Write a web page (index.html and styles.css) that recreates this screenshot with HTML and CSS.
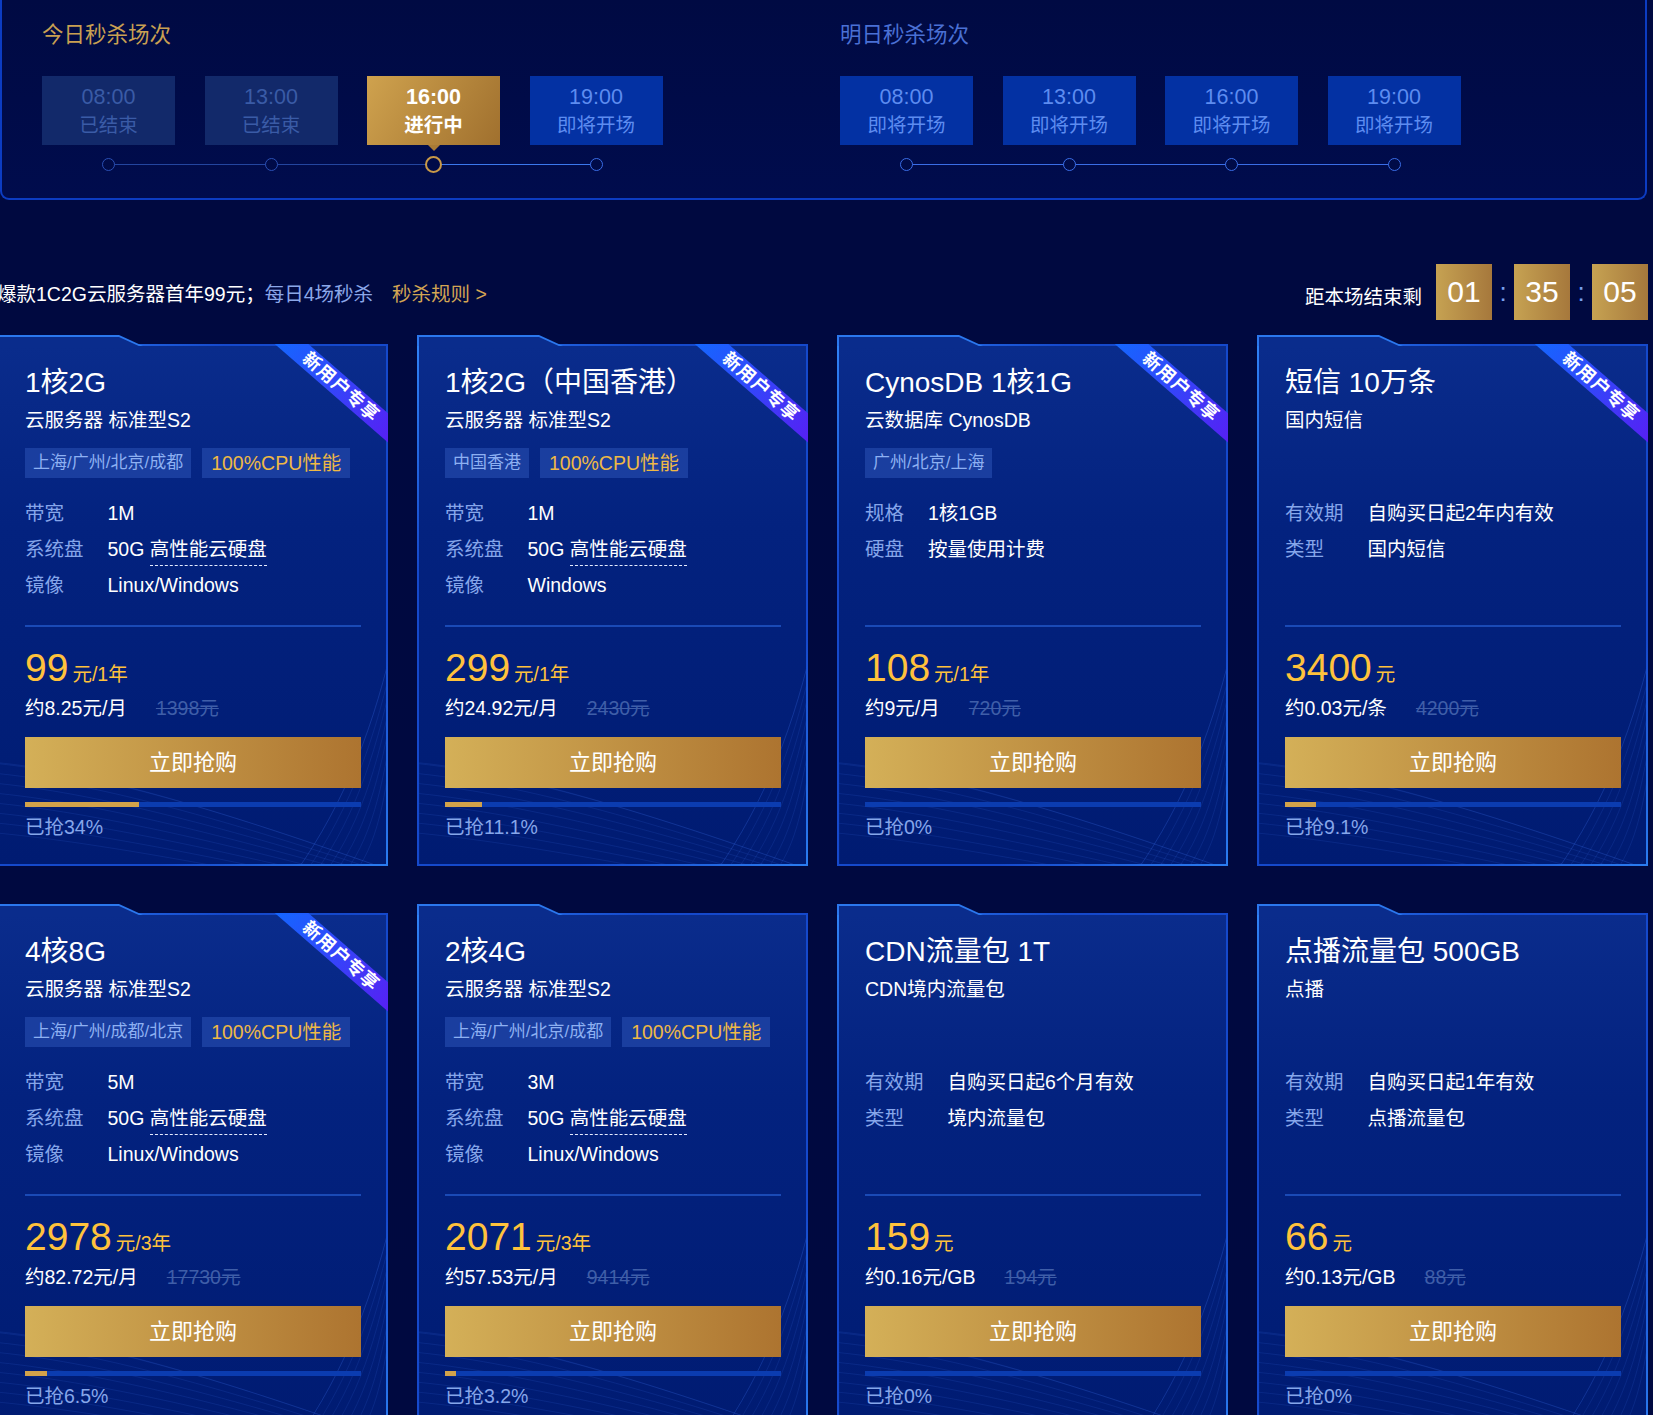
FILE: index.html
```html
<!DOCTYPE html>
<html lang="zh-CN">
<head>
    <meta charset="utf-8">
    <title>限时秒杀</title>
    <link rel="stylesheet" href="styles.css">
</head>

<body>
    <svg class="defs" width="0" height="0" aria-hidden="true">
        <defs>
            <g id="mesh">
                <path class="mesh-fill" d="M0 420 C 100 430, 230 470, 400 530 L 0 530 Z" />
                <path class="mesh-fill" d="M400 290 C 380 380, 350 460, 300 530 L 400 530 Z" />
                <path d="M-10 420 C 100 430, 230 470, 400 530" />
                <path d="M-10 430 C 100 440, 230 478, 400 534" />
                <path d="M-10 440 C 100 450, 230 486, 400 538" />
                <path d="M-10 450 C 100 460, 230 494, 400 542" />
                <path d="M-10 460 C 100 470, 230 502, 400 546" />
                <path d="M-10 470 C 100 480, 230 510, 400 550" />
                <path d="M-10 480 C 100 490, 230 518, 400 554" />
                <path d="M-10 490 C 100 500, 230 526, 400 558" />
                <path d="M400 290 C 380 380, 350 460, 300 530" />
                <path d="M400 305 C 382 390, 356 466, 310 530" />
                <path d="M400 320 C 384 400, 362 472, 320 530" />
                <path d="M400 335 C 386 410, 368 478, 330 530" />
                <path d="M400 350 C 388 420, 374 484, 340 530" />
                <path d="M400 365 C 390 430, 380 490, 350 530" />
                <path d="M400 380 C 392 440, 386 496, 360 530" />
            </g>
        </defs>
    </svg>

    <div class="page">
        <div class="sessions">
            <div class="days">
                <div class="day">
                    <div class="day-title today">今日秒杀场次</div>
                    <div class="slots">
                        <div class="slot ended"><b>08:00</b><span>已结束</span></div>
                        <div class="slot ended"><b>13:00</b><span>已结束</span></div>
                        <div class="slot active"><b>16:00</b><span>进行中</span></div>
                        <div class="slot soon"><b>19:00</b><span>即将开场</span></div>
                    </div>
                    <div class="track track-today"><i></i><i></i><i class="on"></i><i class="next"></i></div>
                </div>
                <div class="day">
                    <div class="day-title">明日秒杀场次</div>
                    <div class="slots">
                        <div class="slot soon"><b>08:00</b><span>即将开场</span></div>
                        <div class="slot soon"><b>13:00</b><span>即将开场</span></div>
                        <div class="slot soon"><b>16:00</b><span>即将开场</span></div>
                        <div class="slot soon"><b>19:00</b><span>即将开场</span></div>
                    </div>
                    <div class="track track-next"><i></i><i></i><i></i><i></i></div>
                </div>
            </div>
        </div>

        <div class="promo">
            <div class="promo-text">
                <span class="hot">爆款1C2G云服务器首年99元；</span><span class="daily">每日4场秒杀</span><a class="rules">秒杀规则 &gt;</a>
            </div>
            <div class="countdown">
                <span class="cd-label">距本场结束剩</span>
                <b>01</b><em>:</em><b>35</b><em>:</em><b>05</b>
            </div>
        </div>

        <div class="cards">
            <!-- row 1 -->
            <div class="card">
                <svg class="mesh" viewBox="0 0 391 522" preserveAspectRatio="none"><use href="#mesh" /></svg>
                <div class="ribbon-wrap"><div class="ribbon">新用户专享</div></div>
                <div class="card-title">1核2G</div>
                <div class="card-sub">云服务器 标准型S2</div>
                <div class="tags"><span class="tag">上海/广州/北京/成都</span><span class="tag gold">100%CPU性能</span></div>
                <dl class="specs">
                    <dt>带宽</dt><dd>1M</dd>
                    <dt>系统盘</dt><dd>50G <u>高性能云硬盘</u></dd>
                    <dt>镜像</dt><dd>Linux/Windows</dd>
                </dl>
                <div class="deal">
                    <div class="price"><strong>99</strong><span>元/1年</span></div>
                    <div class="monthly">约8.25元/月<s>1398元</s></div>
                    <a class="buy">立即抢购</a>
                    <div class="bar"><i style="width:34%"></i></div>
                    <div class="sold">已抢34%</div>
                </div>
            </div>

            <div class="card">
                <svg class="mesh" viewBox="0 0 391 522" preserveAspectRatio="none"><use href="#mesh" /></svg>
                <div class="ribbon-wrap"><div class="ribbon">新用户专享</div></div>
                <div class="card-title">1核2G（中国香港）</div>
                <div class="card-sub">云服务器 标准型S2</div>
                <div class="tags"><span class="tag">中国香港</span><span class="tag gold">100%CPU性能</span></div>
                <dl class="specs">
                    <dt>带宽</dt><dd>1M</dd>
                    <dt>系统盘</dt><dd>50G <u>高性能云硬盘</u></dd>
                    <dt>镜像</dt><dd>Windows</dd>
                </dl>
                <div class="deal">
                    <div class="price"><strong>299</strong><span>元/1年</span></div>
                    <div class="monthly">约24.92元/月<s>2430元</s></div>
                    <a class="buy">立即抢购</a>
                    <div class="bar"><i style="width:11.1%"></i></div>
                    <div class="sold">已抢11.1%</div>
                </div>
            </div>

            <div class="card">
                <svg class="mesh" viewBox="0 0 391 522" preserveAspectRatio="none"><use href="#mesh" /></svg>
                <div class="ribbon-wrap"><div class="ribbon">新用户专享</div></div>
                <div class="card-title">CynosDB 1核1G</div>
                <div class="card-sub">云数据库 CynosDB</div>
                <div class="tags"><span class="tag">广州/北京/上海</span></div>
                <dl class="specs">
                    <dt>规格</dt><dd>1核1GB</dd>
                    <dt>硬盘</dt><dd>按量使用计费</dd>
                </dl>
                <div class="deal">
                    <div class="price"><strong>108</strong><span>元/1年</span></div>
                    <div class="monthly">约9元/月<s>720元</s></div>
                    <a class="buy">立即抢购</a>
                    <div class="bar"><i style="width:0%"></i></div>
                    <div class="sold">已抢0%</div>
                </div>
            </div>

            <div class="card">
                <svg class="mesh" viewBox="0 0 391 522" preserveAspectRatio="none"><use href="#mesh" /></svg>
                <div class="ribbon-wrap"><div class="ribbon">新用户专享</div></div>
                <div class="card-title">短信 10万条</div>
                <div class="card-sub">国内短信</div>
                <div class="tags"></div>
                <dl class="specs">
                    <dt>有效期</dt><dd>自购买日起2年内有效</dd>
                    <dt>类型</dt><dd>国内短信</dd>
                </dl>
                <div class="deal">
                    <div class="price"><strong>3400</strong><span>元</span></div>
                    <div class="monthly">约0.03元/条<s>4200元</s></div>
                    <a class="buy">立即抢购</a>
                    <div class="bar"><i style="width:9.1%"></i></div>
                    <div class="sold">已抢9.1%</div>
                </div>
            </div>

            <!-- row 2 -->
            <div class="card">
                <svg class="mesh" viewBox="0 0 391 522" preserveAspectRatio="none"><use href="#mesh" /></svg>
                <div class="ribbon-wrap"><div class="ribbon">新用户专享</div></div>
                <div class="card-title">4核8G</div>
                <div class="card-sub">云服务器 标准型S2</div>
                <div class="tags"><span class="tag">上海/广州/成都/北京</span><span class="tag gold">100%CPU性能</span></div>
                <dl class="specs">
                    <dt>带宽</dt><dd>5M</dd>
                    <dt>系统盘</dt><dd>50G <u>高性能云硬盘</u></dd>
                    <dt>镜像</dt><dd>Linux/Windows</dd>
                </dl>
                <div class="deal">
                    <div class="price"><strong>2978</strong><span>元/3年</span></div>
                    <div class="monthly">约82.72元/月<s>17730元</s></div>
                    <a class="buy">立即抢购</a>
                    <div class="bar"><i style="width:6.5%"></i></div>
                    <div class="sold">已抢6.5%</div>
                </div>
            </div>

            <div class="card">
                <svg class="mesh" viewBox="0 0 391 522" preserveAspectRatio="none"><use href="#mesh" /></svg>
                <div class="card-title">2核4G</div>
                <div class="card-sub">云服务器 标准型S2</div>
                <div class="tags"><span class="tag">上海/广州/北京/成都</span><span class="tag gold">100%CPU性能</span></div>
                <dl class="specs">
                    <dt>带宽</dt><dd>3M</dd>
                    <dt>系统盘</dt><dd>50G <u>高性能云硬盘</u></dd>
                    <dt>镜像</dt><dd>Linux/Windows</dd>
                </dl>
                <div class="deal">
                    <div class="price"><strong>2071</strong><span>元/3年</span></div>
                    <div class="monthly">约57.53元/月<s>9414元</s></div>
                    <a class="buy">立即抢购</a>
                    <div class="bar"><i style="width:3.2%"></i></div>
                    <div class="sold">已抢3.2%</div>
                </div>
            </div>

            <div class="card">
                <svg class="mesh" viewBox="0 0 391 522" preserveAspectRatio="none"><use href="#mesh" /></svg>
                <div class="card-title">CDN流量包 1T</div>
                <div class="card-sub">CDN境内流量包</div>
                <div class="tags"></div>
                <dl class="specs">
                    <dt>有效期</dt><dd>自购买日起6个月有效</dd>
                    <dt>类型</dt><dd>境内流量包</dd>
                </dl>
                <div class="deal">
                    <div class="price"><strong>159</strong><span>元</span></div>
                    <div class="monthly">约0.16元/GB<s>194元</s></div>
                    <a class="buy">立即抢购</a>
                    <div class="bar"><i style="width:0%"></i></div>
                    <div class="sold">已抢0%</div>
                </div>
            </div>

            <div class="card">
                <svg class="mesh" viewBox="0 0 391 522" preserveAspectRatio="none"><use href="#mesh" /></svg>
                <div class="card-title">点播流量包 500GB</div>
                <div class="card-sub">点播</div>
                <div class="tags"></div>
                <dl class="specs">
                    <dt>有效期</dt><dd>自购买日起1年有效</dd>
                    <dt>类型</dt><dd>点播流量包</dd>
                </dl>
                <div class="deal">
                    <div class="price"><strong>66</strong><span>元</span></div>
                    <div class="monthly">约0.13元/GB<s>88元</s></div>
                    <a class="buy">立即抢购</a>
                    <div class="bar"><i style="width:0%"></i></div>
                    <div class="sold">已抢0%</div>
                </div>
            </div>
        </div>
    </div>
</body>

</html>
```

FILE: styles.css
```css
body{
    margin: 0;
    height: 1415px;
    overflow: hidden;
    background: #000940;
    color: #fff;
    font-family: "Liberation Sans", "Noto Sans CJK SC", sans-serif;
}

.defs{
    position: absolute;
    width: 0;
    height: 0;
}

.page{
    width: 1651px;
    margin-left: -3px;
}

/* sessions panel */
.sessions{
    margin: 0 1px 0 3px;
    padding: 20px 0 24px 40px;
    border: 2px solid #0c3cc2;
    border-top: 0;
    border-radius: 0 0 9px 9px;
    background: linear-gradient(180deg, #000a43, #000c4d);
}

.days{
    display: flex;
    gap: 177.5px;
}

.day-title{
    font-size: 21.5px;
    line-height: 30px;
    color: #4a70d4;
}

.day-title.today{
    color: #c9a052;
}

.slots{
    display: flex;
    gap: 29.5px;
    margin-top: 26px;
}

.slot{
    width: 133px;
    height: 69px;
    box-sizing: border-box;
    padding-top: 7px;
    display: flex;
    flex-direction: column;
    align-items: center;
    font-size: 19.5px;
    line-height: 28px;
}

.slot b{
    font-size: 21.5px;
    font-weight: normal;
}

.slot.ended{
    background: #12296a;
    color: #3a5ba6;
}

.slot.soon{
    background: #0331a3;
    color: #5d8cf0;
}

.slot.active{
    position: relative;
    background: linear-gradient(120deg, #cfa24e, #a0702e);
    color: #fff;
    font-weight: bold;
}

.slot.active b{
    font-weight: bold;
}

.slot.active::after{
    content: '';
    position: absolute;
    left: 50%;
    bottom: -6px;
    margin-left: -6px;
    border: 6px solid transparent;
    border-bottom: 0;
    border-top-color: #a97b36;
}

.track{
    position: relative;
    display: flex;
    gap: 29.5px;
    height: 20px;
    margin-top: 9px;
}

.track::before{
    content: '';
    position: absolute;
    left: 66.5px;
    right: 66.5px;
    top: 10px;
    height: 1px;
}

.track-today::before{
    background: linear-gradient(90deg, #23459f 66.6%, #3b78ee 66.6%);
}

.track-next::before{
    background: #3a6de6;
}

.track i{
    width: 133px;
    display: flex;
    justify-content: center;
    align-items: center;
}

.track i::before{
    content: '';
    position: relative;
    z-index: 1;
    width: 11px;
    height: 11px;
    border: 1.5px solid #2a4fb4;
    border-radius: 50%;
    background: #000b48;
}

.track i.next::before, .track-next i::before{
    border-color: #3a6de6;
}

.track i.on::before{
    width: 13px;
    height: 13px;
    border: 2px solid #c99a48;
}

/* promo line */
.promo{
    display: flex;
    justify-content: space-between;
    align-items: center;
    height: 56px;
    margin-top: 64px;
}

.promo-text{
    font-size: 19.5px;
    white-space: nowrap;
}

.daily{
    color: #8ba7e8;
}

.rules{
    margin-left: 19px;
    color: #d3a553;
}

.countdown{
    display: flex;
    align-items: center;
}

.cd-label{
    margin-right: 14px;
    padding-top: 6px;
    font-size: 19.5px;
}

.countdown b{
    width: 56px;
    height: 56px;
    line-height: 56px;
    text-align: center;
    font-size: 30px;
    font-weight: normal;
    background: linear-gradient(90deg, #c6a252, #a6783c);
}

.countdown em{
    width: 22px;
    text-align: center;
    font-style: normal;
    font-size: 26px;
    color: #7aa0ee;
}

/* cards */
.cards{
    display: grid;
    grid-template-columns: repeat(4, 391px);
    column-gap: 29px;
    row-gap: 38px;
    margin-top: 15px;
}

.card{
    position: relative;
    isolation: isolate;
    height: 522px;
    box-sizing: border-box;
    margin-top: 9px;
    padding: 20px 25px 0 26px;
    border: 2px solid;
    border-image: linear-gradient(135deg, #2f82f6, #1549cc 25%, #1549cc 75%, #2b7cf0) 1;
    background: linear-gradient(180deg, #0a2c8c 0%, #03227f 35%, #001b72 100%);
}

.card::before, .card::after{
    content: '';
    position: absolute;
}

.card::before{
    left: -2px;
    top: -11px;
    width: 146px;
    height: 11px;
    background: #2b78ee;
    clip-path: polygon(0 0, 122px 0, 146px 100%, 0 100%);
}

.card::after{
    left: 0;
    top: -9px;
    width: 142px;
    height: 10px;
    background: #0a2c8c;
    clip-path: polygon(0 0, 120px 0, 142px 100%, 0 100%);
}

.mesh{
    position: absolute;
    left: 0;
    top: 0;
    width: 100%;
    height: 100%;
    z-index: -1;
    fill: none;
    stroke: rgba(70, 130, 255, 0.13);
    stroke-width: 1;
}

.mesh .mesh-fill{
    stroke: none;
    fill: rgba(30, 90, 235, 0.1);
}

.ribbon-wrap{
    position: absolute;
    top: -2px;
    right: -2px;
    width: 150px;
    height: 150px;
    overflow: hidden;
}

.ribbon{
    position: absolute;
    top: 32px;
    right: -33px;
    width: 160px;
    height: 22px;
    line-height: 22px;
    transform: rotate(41deg);
    background: linear-gradient(90deg, #1368ff, #5a1cf3);
    text-align: center;
    font-size: 18px;
    font-weight: bold;
    letter-spacing: 1px;
}

.card-title{
    font-size: 28px;
    line-height: 34px;
}

.card-sub{
    margin-top: 6px;
    font-size: 19.5px;
    line-height: 28px;
}

.tags{
    display: flex;
    gap: 11px;
    height: 30px;
    margin-top: 14px;
}

.tag{
    padding: 0 8px;
    line-height: 30px;
    font-size: 17px;
    color: #8db0f2;
    background: #1a3e9f;
}

.tag.gold{
    padding: 0 9px;
    font-size: 19.5px;
    color: #efb945;
}

.specs{
    display: grid;
    grid-template-columns: max-content 1fr;
    grid-auto-rows: 36px;
    align-content: start;
    column-gap: 24px;
    height: 108px;
    margin: 17px 0 0;
    font-size: 19.5px;
    line-height: 36px;
}

.specs dt{
    color: #86a6ea;
}

.specs dd{
    margin: 0;
}

.specs u{
    text-decoration: none;
    padding-bottom: 5px;
    border-bottom: 1px dashed #e6ecff;
}

.deal{
    margin-top: 22px;
    border-top: 2px solid #1a4ab6;
}

.price{
    height: 44px;
    margin-top: 19px;
    line-height: 44px;
    color: #ffc23c;
    white-space: nowrap;
}

.price strong{
    font-size: 39px;
    font-weight: normal;
}

.price span{
    margin-left: 4px;
    font-size: 19.5px;
    line-height: 20px;
}

.monthly{
    margin-top: 4px;
    font-size: 19.5px;
    line-height: 28px;
}

.monthly s{
    margin-left: 29px;
    color: #3f5ea8;
}

.buy{
    display: block;
    height: 51px;
    margin-top: 15px;
    line-height: 51px;
    text-align: center;
    font-size: 22px;
    background: linear-gradient(90deg, #d4b058, #ad7430);
}

.bar{
    height: 5px;
    margin-top: 14px;
    background: #0b3cb0;
}

.bar i{
    display: block;
    height: 100%;
    background: #d2a24a;
}

.sold{
    margin-top: 6px;
    font-size: 19.5px;
    line-height: 28px;
    color: #86a6ea;
}
```
